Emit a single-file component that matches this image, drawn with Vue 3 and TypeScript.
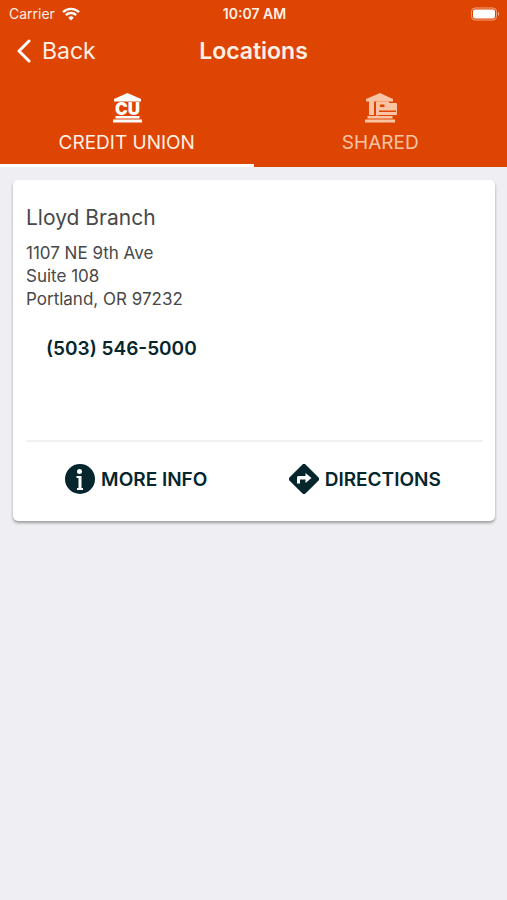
<script setup lang="ts">
import { ref } from 'vue'

type TabId = 'credit-union' | 'shared'

interface Branch {
  name: string
  address: string[]
  phone: string
}

const activeTab = ref<TabId>('credit-union')

const branch: Branch = {
  name: 'Lloyd Branch',
  address: ['1107 NE 9th Ave', 'Suite 108', 'Portland, OR 97232'],
  phone: '(503) 546-5000',
}
</script>

<template>
  <div class="screen">
    <header class="header">
      <div class="status">
        <span class="carrier">
          Carrier
          <svg class="wifi" viewBox="0 0 18 14" aria-hidden="true">
            <path d="M1 5.2a11.4 11.4 0 0 1 16 0" />
            <path d="M3.9 8.1a7.2 7.2 0 0 1 10.2 0" />
            <path class="solid" d="M9 13.4 6.3 10.7a3.8 3.8 0 0 1 5.4 0z" />
          </svg>
        </span>
        <span class="time">10:07 AM</span>
        <svg class="battery" viewBox="0 0 30 14" aria-hidden="true">
          <rect class="shell" x="1.5" y="1" width="25" height="12" rx="3.5" />
          <rect class="charge" x="3" y="2.5" width="22" height="9" rx="2" />
          <path class="cap" d="M28 5c1.6.4 1.6 3.6 0 4z" />
        </svg>
      </div>

      <div class="nav">
        <button class="back" type="button">
          <svg class="chevron" viewBox="0 0 16 24" aria-hidden="true">
            <path d="M13 2 3 12l10 10" />
          </svg>
          Back
        </button>
        <h1 class="title">Locations</h1>
      </div>

      <div class="tabs" role="tablist">
        <button
          class="tab"
          :class="{ active: activeTab === 'credit-union' }"
          type="button"
          role="tab"
          :aria-selected="activeTab === 'credit-union'"
          @click="activeTab = 'credit-union'"
        >
          <svg class="tab-icon" viewBox="0 0 34 30" aria-hidden="true">
            <path d="M17.500 0 31 6v2.500H4V6z" />
            <text class="monogram" x="17.500" y="21.500" text-anchor="middle">CU</text>
            <rect x="5.500" y="23" width="24" height="2.500" />
            <rect x="3" y="26.500" width="29" height="3" />
          </svg>
          CREDIT UNION
        </button>
        <button
          class="tab"
          :class="{ active: activeTab === 'shared' }"
          type="button"
          role="tab"
          :aria-selected="activeTab === 'shared'"
          @click="activeTab = 'shared'"
        >
          <svg class="tab-icon" viewBox="0 0 34 30" aria-hidden="true">
            <path d="M17 0 30 6v2.500H3V6z" />
            <rect x="6" y="8" width="5" height="14" />
            <path d="M13 8.500h13v2H15.500v12H13z" />
            <path
              fill-rule="evenodd"
              d="M15.500 10H33a1 1 0 0 1 1 1v10a1 1 0 0 1-1 1H15.500a1 1 0 0 1-1-1V11a1 1 0 0 1 1-1zM17 11.500v2.500h4.500v-2.500zM16 17.500v1.500h17v-1.500z"
            />
            <rect x="4.500" y="23" width="25" height="2.500" />
            <rect x="2" y="26.500" width="30" height="3" />
          </svg>
          SHARED
        </button>
      </div>
    </header>

    <main class="content">
      <article class="card">
        <h2 class="name">{{ branch.name }}</h2>
        <address class="address">
          <span v-for="line in branch.address" :key="line">{{ line }}</span>
        </address>
        <a class="phone" href="tel:+15035465000">{{ branch.phone }}</a>
        <div class="actions">
          <button class="action" type="button">
            <svg class="action-icon" viewBox="0 0 30 30" aria-hidden="true">
              <circle cx="15" cy="15" r="15" />
              <circle class="cut" cx="14.500" cy="7.500" r="2.500" />
              <path class="cut" d="M11.500 12H16.500v12H18v2h-6v-2h1.500V14h-2z" />
            </svg>
            MORE INFO
          </button>
          <button class="action" type="button">
            <svg class="action-icon" viewBox="0 0 30 30" aria-hidden="true">
              <path d="M13 .9a2.800 2.800 0 0 1 4 0L29.100 13a2.800 2.800 0 0 1 0 4L17 29.100a2.800 2.800 0 0 1-4 0L.9 17a2.800 2.800 0 0 1 0-4z" />
              <path class="cut" d="M8 19.500V13.500a1.500 1.500 0 0 1 1.500-1.500H16.500V9l6 5-6 5V15.500H11v4z" />
            </svg>
            DIRECTIONS
          </button>
        </div>
      </article>
    </main>
  </div>
</template>

<style>
body {
  margin: 0;
  background: #efeef3;
}
</style>

<style scoped>
.screen {
  min-height: 100vh;
  background: #efeef3;
  font-family: Inter, 'Liberation Sans', sans-serif;
}

button {
  margin: 0;
  padding: 0;
  border: 0;
  background: none;
  font: inherit;
  color: inherit;
  cursor: pointer;
}

.header {
  background: #de4402;
  color: #fff0e6;
}

.status {
  display: grid;
  grid-template-columns: 1fr auto 1fr;
  align-items: center;
  height: 27px;
  padding: 0 7px 0 9px;
  font-size: 14px;
}

.carrier {
  display: flex;
  align-items: center;
  gap: 7px;
}

.wifi {
  width: 18px;
  height: 14px;
  fill: none;
  stroke: #fff;
  stroke-width: 2.4;
}

.wifi .solid {
  fill: #fff;
  stroke: none;
}

.time {
  font-weight: 600;
}

.battery {
  width: 30px;
  height: 14px;
  justify-self: end;
}

.shell {
  fill: none;
  stroke: #f3a47f;
}

.charge {
  fill: #fff;
}

.cap {
  fill: #f3a47f;
}

.nav {
  display: grid;
  grid-template-columns: 1fr auto 1fr;
  align-items: center;
  height: 48px;
  padding: 0 16px;
}

.back {
  display: flex;
  align-items: center;
  justify-self: start;
  gap: 10px;
  font-size: 23px;
}

.chevron {
  width: 16px;
  height: 24px;
  fill: none;
  stroke: #fff;
  stroke-width: 3;
  stroke-linecap: round;
  stroke-linejoin: round;
}

.title {
  margin: 0;
  font-size: 23px;
  font-weight: 600;
}

.tabs {
  display: grid;
  grid-template-columns: 1fr 1fr;
}

.tab {
  display: flex;
  flex-direction: column;
  align-items: center;
  gap: 8px;
  padding: 18px 0 9px;
  border-bottom: 3px solid transparent;
  font-size: 19px;
  line-height: 24px;
  color: #fac4a4;
}

.tab.active {
  border-bottom-color: #fff;
  color: #fff0e6;
}

.tab-icon {
  width: 34px;
  height: 30px;
  fill: currentColor;
}

.tab.active .tab-icon {
  fill: #fff;
}

.monogram {
  font-size: 17px;
  font-weight: 900;
}

.content {
  padding: 13px 12px 13px 13px;
}

.card {
  padding: 24px 12px 27px 13px;
  border-radius: 5px;
  background: #fff;
  box-shadow: 0 2px 3px rgb(0 0 0 / 35%);
  color: #484848;
}

.name {
  margin: 0;
  font-size: 21px;
  font-weight: 400;
  line-height: 28px;
}

.address {
  display: flex;
  flex-direction: column;
  margin-top: 10px;
  font-size: 17px;
  font-style: normal;
  line-height: 23px;
}

.phone {
  display: inline-block;
  margin: 24px 20px 77px;
  color: #04262c;
  font-size: 19px;
  font-weight: 600;
  line-height: 28px;
  text-decoration: none;
}

.actions {
  display: grid;
  grid-template-columns: 1fr 1fr;
  padding-top: 22px;
  border-top: 2px solid #f1f1f2;
}

.action {
  display: flex;
  align-items: center;
  justify-content: center;
  gap: 6px;
  padding-right: 8px;
  color: #04262c;
  font-size: 19px;
  font-weight: 600;
}

.action-icon {
  width: 30px;
  height: 30px;
  fill: currentColor;
}

.action-icon .cut {
  fill: #fff;
}
</style>
